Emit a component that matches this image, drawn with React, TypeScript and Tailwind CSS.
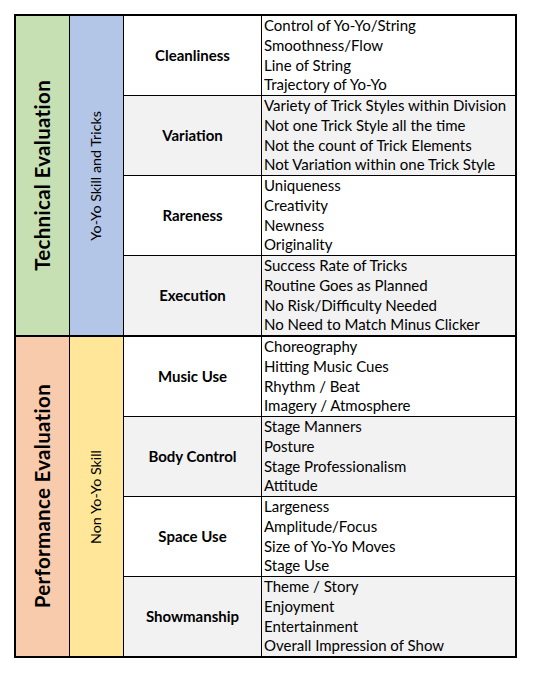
import React from "react";

type Row = { label: string; items: string[]; gray: boolean };

const technical: Row[] = [
  { label: "Cleanliness", gray: false, items: ["Control of Yo-Yo/String", "Smoothness/Flow", "Line of String", "Trajectory of Yo-Yo"] },
  { label: "Variation", gray: true, items: ["Variety of Trick Styles within Division", "Not one Trick Style all the time", "Not the count of Trick Elements", "Not Variation within one Trick Style"] },
  { label: "Rareness", gray: false, items: ["Uniqueness", "Creativity", "Newness", "Originality"] },
  { label: "Execution", gray: true, items: ["Success Rate of Tricks", "Routine Goes as Planned", "No Risk/Difficulty Needed", "No Need to Match Minus Clicker"] },
];

const performance: Row[] = [
  { label: "Music Use", gray: false, items: ["Choreography", "Hitting Music Cues", "Rhythm / Beat", "Imagery / Atmosphere"] },
  { label: "Body Control", gray: true, items: ["Stage Manners", "Posture", "Stage Professionalism", "Attitude"] },
  { label: "Space Use", gray: false, items: ["Largeness", "Amplitude/Focus", "Size of Yo-Yo Moves", "Stage Use"] },
  { label: "Showmanship", gray: true, items: ["Theme / Story", "Enjoyment", "Entertainment", "Overall Impression of Show"] },
];

function Section({
  title,
  sub,
  c1,
  c2,
  rows,
}: {
  title: string;
  sub: string;
  c1: string;
  c2: string;
  rows: Row[];
}) {
  return (
    <div className="flex">
      <div className={`w-[54px] border-r border-black flex items-center justify-center ${c1}`}>
        <div className="[writing-mode:vertical-rl] rotate-180 font-bold text-[20.5px] tracking-[0.3px] leading-none whitespace-nowrap">
          {title}
        </div>
      </div>
      <div className={`w-[54px] border-r border-black flex items-center justify-center ${c2}`}>
        <div className="[writing-mode:vertical-rl] rotate-180 text-[14.3px] leading-none whitespace-nowrap">
          {sub}
        </div>
      </div>
      <div className="flex-1 flex flex-col">
        {rows.map((r, i) => (
          <div
            key={r.label}
            className={`flex ${i < rows.length - 1 ? "h-[80px] border-b border-black" : "h-[79px]"} ${r.gray ? "bg-[#f2f2f2]" : "bg-white"}`}
          >
            <div className="w-[138px] border-r border-black flex items-center justify-center font-bold text-[15px]">
              {r.label}
            </div>
            <div className="flex-1 flex flex-col justify-center pl-[2px] text-[15px] leading-[19.75px]">
              {r.items.map((t) => (
                <div key={t} className="whitespace-nowrap">{t}</div>
              ))}
            </div>
          </div>
        ))}
      </div>
    </div>
  );
}

export default function App() {
  return (
    <div className="w-[534px] h-[674px] bg-white pt-[14px] pl-[14px]" style={{ fontFamily: "Lato, 'Open Sans', sans-serif" }}>
      <div className="w-[503px] border-2 border-black text-black">
        <Section title="Technical Evaluation" sub="Yo-Yo Skill and Tricks" c1="bg-[#c6e0b4]" c2="bg-[#b4c6e7]" rows={technical} />
        <div className="border-t-2 border-black">
          <Section title="Performance Evaluation" sub="Non Yo-Yo Skill" c1="bg-[#f8cbad]" c2="bg-[#ffe699]" rows={performance} />
        </div>
      </div>
    </div>
  );
}
